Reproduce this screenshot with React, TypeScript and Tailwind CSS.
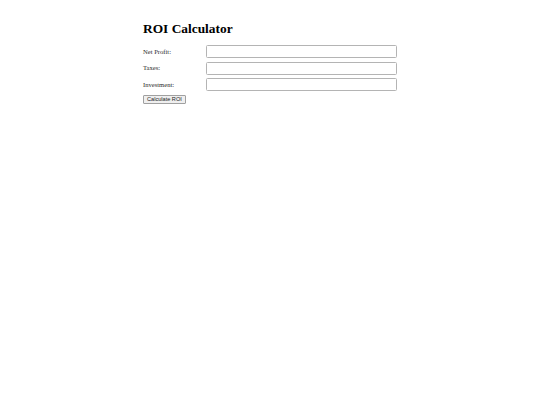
import React, { useState } from 'react';

const fields = [
  { id: 'netProfit', label: 'Net Profit:' },
  { id: 'taxes', label: 'Taxes:' },
  { id: 'investment', label: 'Investment:' },
];

export default function App() {
  const [values, setValues] = useState<Record<string, string>>({});
  const [result, setResult] = useState<string | null>(null);

  const calculate = () => {
    const profit = parseFloat(values.netProfit || '0');
    const taxes = parseFloat(values.taxes || '0');
    const investment = parseFloat(values.investment || '0');
    if (!investment) return;
    setResult((((profit - taxes) / investment) * 100).toFixed(2) + '%');
  };

  return (
    <div className="min-h-screen bg-white font-['Liberation_Serif',serif] text-black">
      <div className="mx-auto w-[254px] pt-[21px]">
        <h1 className="text-[13.4px] font-bold leading-[16px] mb-[8px]">ROI Calculator</h1>
        <div className="flex flex-col gap-[3.5px]">
          {fields.map((f) => (
            <div key={f.id} className="flex items-center">
              <label htmlFor={f.id} className="w-[63px] text-[6.6px] leading-[8px] text-[#2a2a2a]">
                {f.label}
              </label>
              <input
                id={f.id}
                type="text"
                value={values[f.id] || ''}
                onChange={(e) => setValues({ ...values, [f.id]: e.target.value })}
                className="h-[13px] w-[191px] rounded-[1.5px] border border-[#b4b4b4] bg-white"
              />
            </div>
          ))}
        </div>
        <div className="mt-[4px] flex">
          <button
            onClick={calculate}
            className="block h-[9px] rounded-[1px] border border-[#a0a0a0] bg-[#efefef] px-[3px] font-['Liberation_Sans',sans-serif] text-[5.6px] leading-[7px] text-[#222]"
          >
            Calculate ROI
          </button>
        </div>
        {result && <p className="text-[6.6px] mt-[4px]">ROI: {result}</p>}
      </div>
    </div>
  );
}
